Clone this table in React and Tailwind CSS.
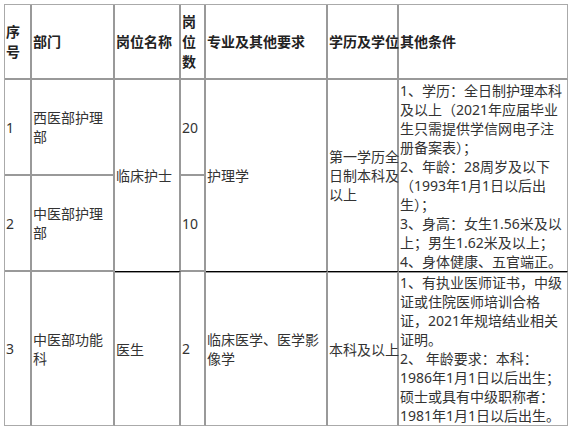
import React from "react";

const IN = "border-r-2 border-b-2 border-[#999]";
const LASTCOL = "border-r border-b-2 border-r-[#aaa] border-b-[#999]";
const LASTROW = "border-r-2 border-b border-r-[#999] border-b-[#aaa]";
const SPAN = "border-r-2 border-b border-r-[#999] border-b-black";
const SPANLAST = "border-r border-b border-r-[#aaa] border-b-black";
const UNDER = "border-r-2 border-b border-t border-r-[#999] border-b-[#aaa] border-t-[#999]";
const UNDERLAST = "border-r border-b border-t border-r-[#aaa] border-b-[#aaa] border-t-[#999]";

const Lines = ({ lines }) =>
  lines.map((l, i) => (
    <React.Fragment key={i}>
      {l}
      {i < lines.length - 1 && <br />}
    </React.Fragment>
  ));

const Th = ({ className, children }) => (
  <th className={`p-0 pl-px text-left align-middle font-bold whitespace-nowrap ${className}`}>
    {children}
  </th>
);

const Td = ({ className, children, ...rest }) => (
  <td className={`p-0 pl-px text-left align-middle whitespace-nowrap ${className}`} {...rest}>
    {children}
  </td>
);

export default function App() {
  const cond1 = [
    "1、学历：全日制护理本科",
    "及以上（2021年应届毕业",
    "生只需提供学信网电子注",
    "册备案表）；",
    "2、年龄：28周岁及以下",
    "（1993年1月1日以后出",
    "生）；",
    "3、身高：女生1.56米及以",
    "上；男生1.62米及以上；",
    "4、身体健康、五官端正。",
  ];
  const cond2 = [
    "1、有执业医师证书，中级",
    "证或住院医师培训合格",
    "证，2021年规培结业相关",
    "证明。",
    "2、 年龄要求：本科：",
    "1986年1月1日以后出生；",
    "硕士或具有中级职称者：",
    "1981年1月1日以后出生。",
  ];

  return (
    <div className="min-h-screen bg-white p-1 font-['Noto_Sans','Noto_Sans_CJK_SC',sans-serif] text-[14px] leading-[19px] text-[#333]">
      <table className="w-[564px] table-fixed border-separate border-spacing-0 border-t border-l border-[#aaa]">
        <thead>
          <tr className="h-[75px] leading-[20px] text-[#222]">
            <Th className={`w-[27px] ${IN}`}><Lines lines={["序", "号"]} /></Th>
            <Th className={`w-[83px] ${IN}`}>部门</Th>
            <Th className={`w-[66px] ${IN}`}>岗位名称</Th>
            <Th className={`w-[25px] ${IN}`}><Lines lines={["岗", "位", "数"]} /></Th>
            <Th className={`w-[122px] ${IN}`}>专业及其他要求</Th>
            <Th className={`w-[71px] ${IN}`}>学历及学位</Th>
            <Th className={`w-[169px] ${LASTCOL}`}>其他条件</Th>
          </tr>
        </thead>
        <tbody>
          <tr className="h-[96px]">
            <Td className={IN}>1</Td>
            <Td className={IN}><Lines lines={["西医部护理", "部"]} /></Td>
            <Td className={SPAN} rowSpan={2}>临床护士</Td>
            <Td className={IN}>20</Td>
            <Td className={SPAN} rowSpan={2}>护理学</Td>
            <Td className={SPAN} rowSpan={2}><Lines lines={["第一学历全", "日制本科及", "以上"]} /></Td>
            <Td className={SPANLAST} rowSpan={2}><Lines lines={cond1} /></Td>
          </tr>
          <tr className="h-[96px]">
            <Td className={IN}>2</Td>
            <Td className={IN}><Lines lines={["中医部护理", "部"]} /></Td>
            <Td className={IN}>10</Td>
          </tr>
          <tr className="h-[153px]">
            <Td className={LASTROW}>3</Td>
            <Td className={LASTROW}><Lines lines={["中医部功能", "科"]} /></Td>
            <Td className={UNDER}>医生</Td>
            <Td className={LASTROW}>2</Td>
            <Td className={UNDER}><Lines lines={["临床医学、医学影", "像学"]} /></Td>
            <Td className={UNDER}>本科及以上</Td>
            <Td className={UNDERLAST}><Lines lines={cond2} /></Td>
          </tr>
        </tbody>
      </table>
    </div>
  );
}
